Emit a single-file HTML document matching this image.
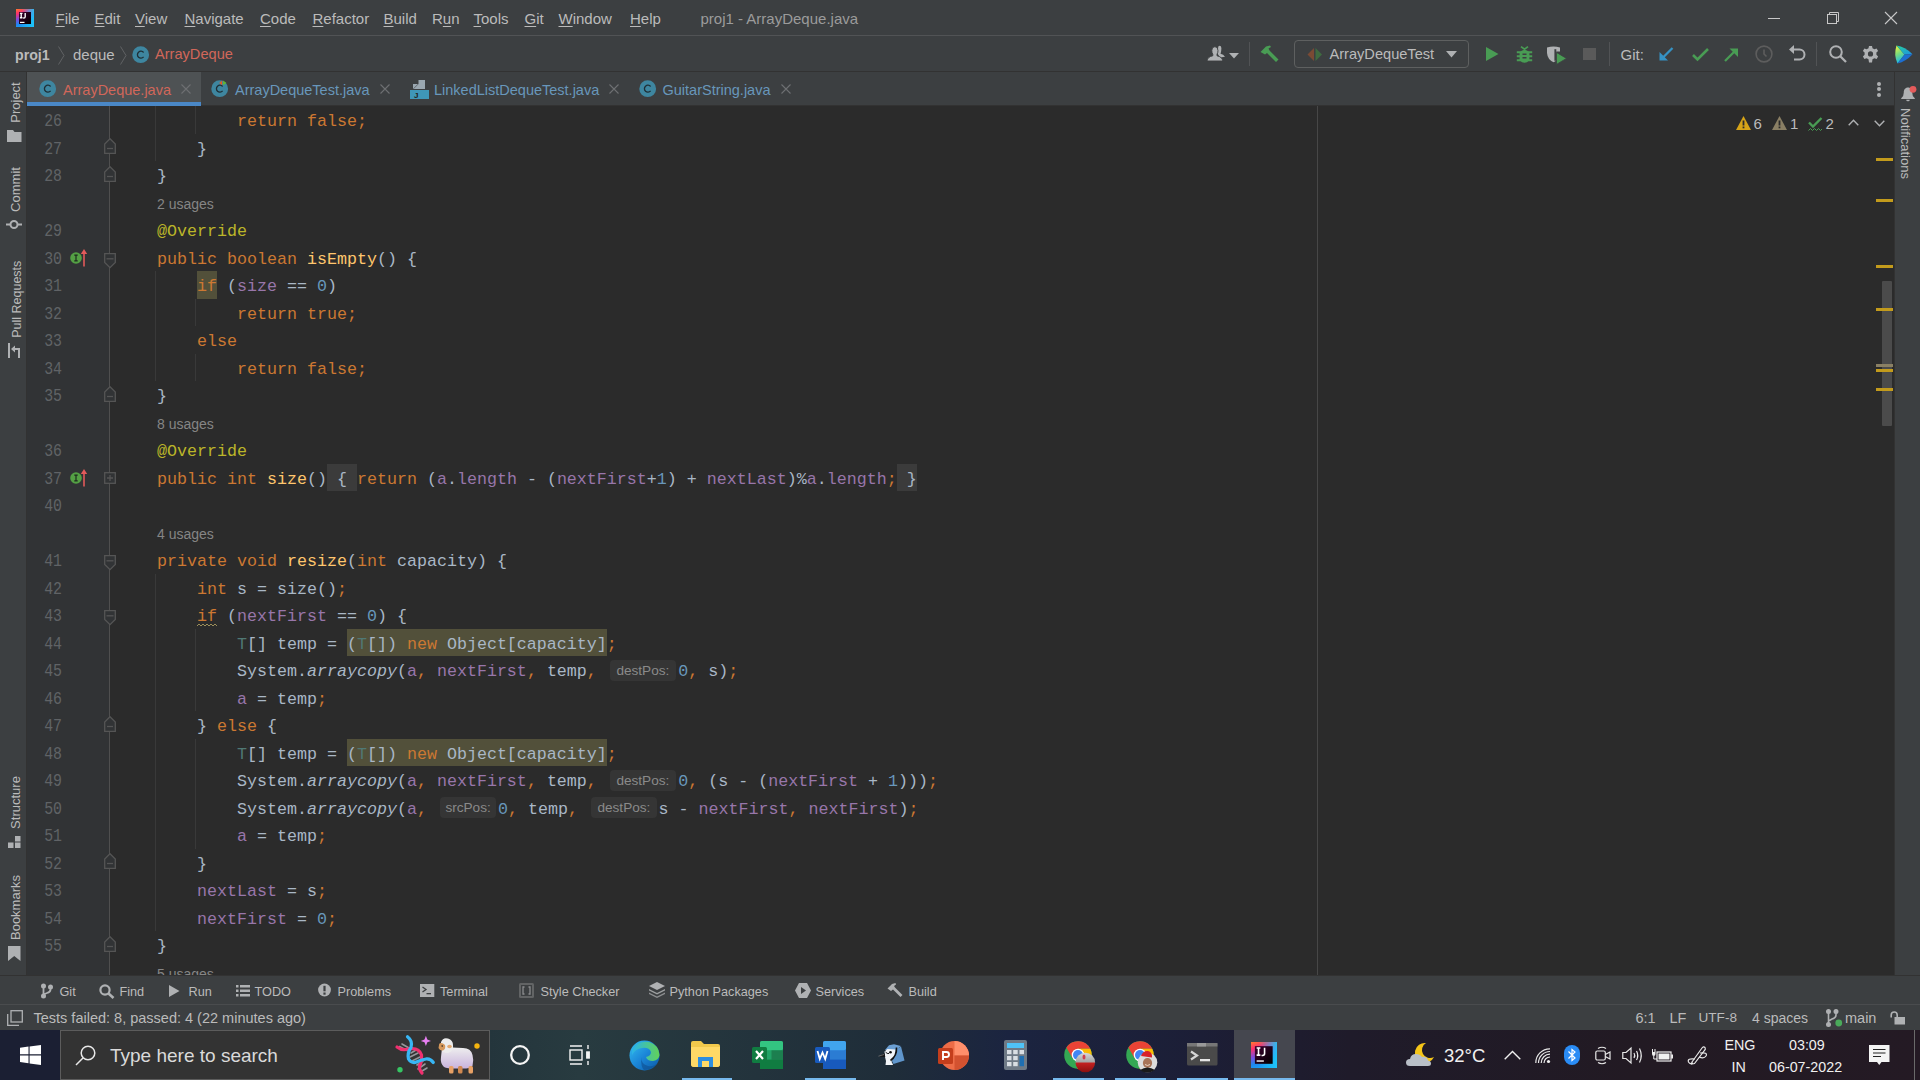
<!DOCTYPE html><html><head><meta charset="utf-8"><style>
*{margin:0;padding:0;box-sizing:border-box}
html,body{width:1920px;height:1080px;overflow:hidden;background:#2b2b2b;font-family:"Liberation Sans",sans-serif;position:relative}
.a{position:absolute;white-space:pre}
.b{position:absolute}
svg{position:absolute;overflow:visible}
.k{color:#cc7832}.an{color:#bbb529}.fn{color:#ffc66d}.f{color:#9876aa}.n{color:#6897bb}.tp{color:#507874}.it{font-style:italic}
.hl{background:#52503a;}
.u{text-decoration:underline;text-underline-offset:2px;text-decoration-thickness:1px}
</style></head><body>
<div class="b" style="left:0;top:0;width:1920px;height:35px;background:#3c3f41"></div>
<div class="b" style="left:0;top:35px;width:1920px;height:1px;background:#515355"></div>
<div class="b" style="left:0;top:36px;width:1920px;height:36px;background:#3c3f41"></div>
<div class="b" style="left:0;top:71px;width:1920px;height:1px;background:#323232"></div>
<div class="b" style="left:0;top:72px;width:1920px;height:33px;background:#3c3f41"></div>
<div class="b" style="left:0;top:105px;width:1920px;height:1px;background:#323232"></div>
<div class="b" style="left:27px;top:106px;width:83px;height:870px;background:#313335"></div>
<div class="b" style="left:110px;top:106px;width:1784px;height:870px;background:#2b2b2b"></div>
<div class="b" style="left:0;top:72px;width:26px;height:904px;background:#3c3f41"></div>
<div class="b" style="left:26px;top:72px;width:1px;height:904px;background:#323232"></div>
<div class="b" style="left:1894px;top:72px;width:1px;height:904px;background:#323232"></div>
<div class="b" style="left:1895px;top:72px;width:25px;height:904px;background:#3c3f41"></div>
<div class="b" style="left:0;top:976px;width:1920px;height:28px;background:#3c3f41"></div>
<div class="b" style="left:0;top:975px;width:1920px;height:1px;background:#323232"></div>
<div class="b" style="left:0;top:1004px;width:1920px;height:1px;background:#4a4c4e"></div>
<div class="b" style="left:0;top:1005px;width:1920px;height:25px;background:#3c3f41"></div>
<div class="b" style="left:0;top:1030px;width:1920px;height:50px;background:linear-gradient(90deg,#1b2033 0%,#24353c 25.5%,#283b40 30.2%,#1f2d39 46.4%,#1b2440 52.6%,#1c1e36 62.5%,#1f1b2a 70.3%,#221a23 84.9%,#241a24 100%)"></div>
<svg style="left:16px;top:9px" width="18" height="18" viewBox="0 0 18 18">
<defs><linearGradient id="ijg" x1="0" y1="0" x2="0.35" y2="1"><stop offset="0" stop-color="#ff7a2e"/><stop offset="0.25" stop-color="#ff2f6d"/><stop offset="0.55" stop-color="#7b4ce0"/><stop offset="0.8" stop-color="#1e88f0"/><stop offset="1" stop-color="#1aa0f5"/></linearGradient>
<linearGradient id="ijg2" x1="0" y1="0" x2="1" y2="0"><stop offset="0.3" stop-color="#1ec8f8" stop-opacity="0"/><stop offset="1" stop-color="#1ec8f8" stop-opacity="0.9"/></linearGradient>
<linearGradient id="ijin" x1="0" y1="0" x2="1" y2="1"><stop offset="0" stop-color="#3d0030"/><stop offset="1" stop-color="#000"/></linearGradient></defs>
<rect x="0" y="0" width="18" height="18" fill="url(#ijg)"/><rect x="0" y="0" width="18" height="18" fill="url(#ijg2)"/><rect x="3" y="3" width="12" height="12" fill="url(#ijin)"/>
<path d="M3.9 4.3H6.5M5.2 4.3V8.7M3.9 8.7H6.5M9.2 4V7.7Q9.2 9 7.9 9H7.2" fill="none" stroke="#fff" stroke-width="1.35"/>
<rect x="4" y="12.8" width="4.5" height="1.2" fill="#fff"/></svg>
<div class="a" style="left:55.50px;top:11.40px;font-family:'Liberation Sans';font-size:15px;line-height:15px;color:#bbbbbb;"><span class="u">F</span>ile</div>
<div class="a" style="left:94.50px;top:11.40px;font-family:'Liberation Sans';font-size:15px;line-height:15px;color:#bbbbbb;"><span class="u">E</span>dit</div>
<div class="a" style="left:135.00px;top:11.40px;font-family:'Liberation Sans';font-size:15px;line-height:15px;color:#bbbbbb;"><span class="u">V</span>iew</div>
<div class="a" style="left:184.50px;top:11.40px;font-family:'Liberation Sans';font-size:15px;line-height:15px;color:#bbbbbb;"><span class="u">N</span>avigate</div>
<div class="a" style="left:260.00px;top:11.40px;font-family:'Liberation Sans';font-size:15px;line-height:15px;color:#bbbbbb;"><span class="u">C</span>ode</div>
<div class="a" style="left:312.50px;top:11.40px;font-family:'Liberation Sans';font-size:15px;line-height:15px;color:#bbbbbb;"><span class="u">R</span>efactor</div>
<div class="a" style="left:383.50px;top:11.40px;font-family:'Liberation Sans';font-size:15px;line-height:15px;color:#bbbbbb;"><span class="u">B</span>uild</div>
<div class="a" style="left:432.00px;top:11.40px;font-family:'Liberation Sans';font-size:15px;line-height:15px;color:#bbbbbb;">R<span class="u">u</span>n</div>
<div class="a" style="left:473.50px;top:11.40px;font-family:'Liberation Sans';font-size:15px;line-height:15px;color:#bbbbbb;"><span class="u">T</span>ools</div>
<div class="a" style="left:524.50px;top:11.40px;font-family:'Liberation Sans';font-size:15px;line-height:15px;color:#bbbbbb;"><span class="u">G</span>it</div>
<div class="a" style="left:558.50px;top:11.40px;font-family:'Liberation Sans';font-size:15px;line-height:15px;color:#bbbbbb;"><span class="u">W</span>indow</div>
<div class="a" style="left:630.00px;top:11.40px;font-family:'Liberation Sans';font-size:15px;line-height:15px;color:#bbbbbb;"><span class="u">H</span>elp</div>
<div class="a" style="left:700.50px;top:11.40px;font-family:'Liberation Sans';font-size:15px;line-height:15px;color:#9b9b9b;">proj1 - ArrayDeque.java</div>
<div class="b" style="left:1768px;top:18px;width:12px;height:1px;background:#c8c8c8"></div>
<svg style="left:1826px;top:11px" width="14" height="14" viewBox="0 0 14 14" fill="none" stroke="#c8c8c8" stroke-width="1">
<rect x="1.5" y="3.5" width="9" height="9"/><path d="M3.5 3.5V1.5H12.5V10.5H10.5"/></svg>
<svg style="left:1884px;top:11px" width="14" height="14" viewBox="0 0 14 14" fill="none" stroke="#c8c8c8" stroke-width="1.1">
<path d="M1 1L13 13M13 1L1 13"/></svg>
<div class="a" style="left:15.00px;top:47.58px;font-family:'Liberation Sans';font-size:14.2px;line-height:14.2px;color:#bbbbbb;font-weight:bold">proj1</div>
<svg style="left:57.5px;top:45.5px" width="7" height="19" viewBox="0 0 7 19" fill="none" stroke="#606264" stroke-width="1"><path d="M0.5 0.5L6 9.5L0.5 18.5"/></svg>
<div class="a" style="left:73.00px;top:46.90px;font-family:'Liberation Sans';font-size:15px;line-height:15px;color:#bbbbbb;">deque</div>
<svg style="left:119.5px;top:45.5px" width="7" height="19" viewBox="0 0 7 19" fill="none" stroke="#606264" stroke-width="1"><path d="M0.5 0.5L6 9.5L0.5 18.5"/></svg>
<svg style="left:132.3px;top:45.599999999999994px" width="17.4" height="17.4" viewBox="-9 -9 18 18">
<circle cx="0" cy="0" r="8.7" fill="#3e86a0"/><path d="M3 -2.3A3.6 3.6 0 1 0 3 2.3" fill="none" stroke="#1f2f36" stroke-width="1.35"/></svg>
<div class="a" style="left:155.00px;top:47.24px;font-family:'Liberation Sans';font-size:14.6px;line-height:14.6px;color:#d1675a;">ArrayDeque</div>
<svg style="left:1200px;top:40px" width="28" height="24" viewBox="0 0 28 24">
<path d="M18.3 6.5Q19.5 5.3 20.8 6.2Q21.8 7.5 21.2 11Q20.8 13 20.5 13.8Q23.5 14.5 25 16.8L20 17.5L17.5 13.5z" fill="#afb1b3"/>
<path d="M7 21Q7.5 16.8 12.8 15.8V14.2Q11.8 12.8 11.8 10.6Q11.8 6.7 14.9 6.7Q18 6.7 18 10.6Q18 12.8 17 14.2V15.8Q22.2 16.8 22.8 21z" fill="#afb1b3" stroke="#3c3f41" stroke-width="0.9"/></svg>
<svg style="left:1229px;top:52.5px" width="10" height="6" viewBox="0 0 10 6"><path d="M0 0H10L5 5.5z" fill="#afb1b3"/></svg>
<div class="b" style="left:1249px;top:42px;width:1px;height:24px;background:#515355"></div>
<svg style="left:1260px;top:44.5px" width="19" height="18" viewBox="0 0 19 18">
<path d="M0.5 7L6 1.5L10 0.5L11 2L8.5 3.5L9.5 5.5L18.5 14.5L16 17L7 8L5 9.5z" fill="#499c54"/></svg>
<div class="b" style="left:1294px;top:40px;width:174.5px;height:27.5px;border:1.3px solid #5e6060;border-radius:4px"></div>
<svg style="left:1307px;top:47.5px" width="16" height="13" viewBox="0 0 16 13">
<path d="M7 0L0.5 6.5L7 13z" fill="#7a4a34"/><path d="M8.5 0L15 6.5L8.5 13z" fill="#3f6b40"/></svg>
<div class="a" style="left:1329.50px;top:47.44px;font-family:'Liberation Sans';font-size:14.6px;line-height:14.6px;color:#bbbbbb;">ArrayDequeTest</div>
<svg style="left:1446px;top:51px" width="11" height="7" viewBox="0 0 11 7"><path d="M0 0H11L5.5 6.5z" fill="#afb1b3"/></svg>
<svg style="left:1486px;top:47px" width="13" height="14" viewBox="0 0 13 14"><path d="M0 0L12.5 7L0 14z" fill="#499c54"/></svg>
<svg style="left:1515.5px;top:45.5px" width="17" height="18" viewBox="0 0 17 18">
<path d="M5 0.6L8.5 3.2L12 0.6" fill="none" stroke="#499c54" stroke-width="1.8"/>
<path d="M3.6 6.3Q8.5 1.2 13.4 6.3V14.2Q8.5 19.2 3.6 14.2z" fill="#499c54"/>
<path d="M0.8 6.2H16.2M0.8 10.25H16.2M0.8 14.3H16.2" stroke="#499c54" stroke-width="2.1"/>
<path d="M6.5 8.2H10.5M6.5 11.8H10.5" stroke="#3c3f41" stroke-width="1.6"/></svg>
<svg style="left:1546px;top:45px" width="21" height="20" viewBox="0 0 21 20">
<path d="M1 2.5Q7.5 0.3 14 2.5V6.4H10.3V15.5Q9 16.5 7.5 17.2Q1.5 14.5 1 8z" fill="#afb1b3"/><rect x="8.4" y="4.2" width="1.9" height="11.6" fill="#3c3f41"/>
<path d="M10.5 7.4L20.5 13.4L10.5 19.4z" fill="#499c54" stroke="#3c3f41" stroke-width="0.8"/></svg>
<div class="b" style="left:1583px;top:47.5px;width:12.5px;height:12.5px;background:#5a5a5a"></div>
<div class="b" style="left:1609px;top:42px;width:1px;height:24px;background:#515355"></div>
<div class="a" style="left:1620.50px;top:47.10px;font-family:'Liberation Sans';font-size:15px;line-height:15px;color:#bbbbbb;">Git:</div>
<svg style="left:1659px;top:46.5px" width="15" height="14" viewBox="0 0 15 14">
<path d="M13.5 1L3 11.5" stroke="#3592c4" stroke-width="2.3"/><path d="M0.5 5V13.5H9z" fill="#3592c4"/></svg>
<svg style="left:1691.5px;top:46.5px" width="17" height="14" viewBox="0 0 17 14">
<path d="M1 8L5.5 12.5L16 2" fill="none" stroke="#499c54" stroke-width="2.6"/></svg>
<svg style="left:1723.5px;top:47.5px" width="15" height="14" viewBox="0 0 15 14">
<path d="M1 13L11.5 2.5" stroke="#499c54" stroke-width="2.3"/><path d="M5.5 0.5H14V9z" fill="#499c54"/></svg>
<svg style="left:1755px;top:45px" width="18" height="18" viewBox="0 0 18 18" fill="none" stroke="#5d5d5d" stroke-width="1.6">
<circle cx="9" cy="9" r="7.9"/><path d="M9 4.5V9L11.5 11.5"/></svg>
<svg style="left:1788.5px;top:45px" width="17" height="17" viewBox="0 0 17 17">
<path d="M0 4.5L5 0V9z" fill="#afb1b3"/><path d="M4 4.5H10.5A5 5 0 0 1 10.5 14.5H5" fill="none" stroke="#afb1b3" stroke-width="2"/></svg>
<div class="b" style="left:1816px;top:42px;width:1px;height:24px;background:#515355"></div>
<svg style="left:1829px;top:45px" width="18" height="18" viewBox="0 0 18 18" fill="none" stroke="#afb1b3">
<circle cx="7" cy="7" r="5.8" stroke-width="2"/><path d="M11 11L17 17" stroke-width="2.3"/></svg>
<svg style="left:1861.5px;top:45.5px" width="17" height="17" viewBox="0 0 17 17">
<path fill="#afb1b3" fill-rule="evenodd" d="M7 0H10L10.5 2.3L12.4 3.3L14.6 2.5L16.1 5.1L14.4 6.6V8.8L16.1 10.4L14.6 13L12.4 12.2L10.5 13.2L10 16.5H7L6.5 13.2L4.6 12.2L2.4 13L0.9 10.4L2.6 8.8V6.6L0.9 5.1L2.4 2.5L4.6 3.3L6.5 2.3zM8.5 5.3A2.6 2.6 0 1 0 8.5 10.5A2.6 2.6 0 1 0 8.5 5.3z"/></svg>
<svg style="left:1893.5px;top:44.5px" width="19" height="19" viewBox="0 0 19 19">
<defs><linearGradient id="gw1" x1="0" y1="0" x2="0.3" y2="1"><stop offset="0" stop-color="#fcf83a"/><stop offset="0.5" stop-color="#7ddc7a"/><stop offset="1" stop-color="#16b8ec"/></linearGradient>
<linearGradient id="gw2" x1="0" y1="0" x2="1" y2="1"><stop offset="0" stop-color="#28d39a"/><stop offset="1" stop-color="#1c8fe6"/></linearGradient></defs>
<path d="M2.5 0.5L10.5 9.5L3.5 18.5Q-0.5 10 2.5 0.5z" fill="url(#gw1)"/><path d="M2.5 0.5Q11 1.5 18.5 9.3L10.5 9.5z" fill="url(#gw2)"/><path d="M3.5 18.5L10.5 9.5L18.5 9.3Q12 16.5 3.5 18.5z" fill="#1d6fd1"/></svg>
<div class="b" style="left:27px;top:72px;width:174px;height:34px;background:#4e5254"></div>
<div class="b" style="left:27px;top:102px;width:174px;height:4px;background:#4a88c7"></div>
<svg style="left:39.3px;top:80.3px" width="17.4" height="17.4" viewBox="-9 -9 18 18">
<circle cx="0" cy="0" r="8.7" fill="#3e86a0"/><path d="M3 -2.3A3.6 3.6 0 1 0 3 2.3" fill="none" stroke="#1f2f36" stroke-width="1.35"/></svg>
<div class="a" style="left:63.00px;top:82.93px;font-family:'Liberation Sans';font-size:14.5px;line-height:14.5px;color:#d1675a;">ArrayDeque.java</div>
<svg style="left:181px;top:84px" width="10" height="10" viewBox="0 0 10 10"><path d="M0.5 0.5L9.5 9.5M9.5 0.5L0.5 9.5" stroke="#6e7072" stroke-width="1.1"/></svg>
<svg style="left:211.3px;top:80.3px" width="17.4" height="17.4" viewBox="-9 -9 18 18">
<circle cx="0" cy="0" r="8.7" fill="#3e86a0"/><path d="M3 -2.3A3.6 3.6 0 1 0 3 2.3" fill="none" stroke="#1f2f36" stroke-width="1.35"/><path d="M2.5 -8.5L-0.5 -6L2.5 -3.5z" fill="#e05a29"/><path d="M3.5 -8.5L7 -6L3.5 -3.5z" fill="#5fb832"/></svg>
<div class="a" style="left:235.00px;top:82.93px;font-family:'Liberation Sans';font-size:14.5px;line-height:14.5px;color:#6897bb;">ArrayDequeTest.java</div>
<svg style="left:380px;top:84px" width="10" height="10" viewBox="0 0 10 10"><path d="M0.5 0.5L9.5 9.5M9.5 0.5L0.5 9.5" stroke="#6e7072" stroke-width="1.1"/></svg>
<svg style="left:410px;top:80px" width="19" height="19" viewBox="0 0 19 19">
<path d="M3 9L8 4H3z" fill="#9aa7b0"/><path d="M8.5 0H15V9H3.5L8.5 4z" fill="#9aa7b0"/>
<rect x="0" y="10" width="19" height="9" fill="#40b6e0" opacity="0.75"/><text x="4" y="18" font-family="Liberation Sans" font-size="8" font-weight="bold" fill="#231f20">J</text></svg>
<div class="a" style="left:434.00px;top:82.93px;font-family:'Liberation Sans';font-size:14.5px;line-height:14.5px;color:#6897bb;">LinkedListDequeTest.java</div>
<svg style="left:609px;top:84px" width="10" height="10" viewBox="0 0 10 10"><path d="M0.5 0.5L9.5 9.5M9.5 0.5L0.5 9.5" stroke="#6e7072" stroke-width="1.1"/></svg>
<svg style="left:638.8px;top:80.3px" width="17.4" height="17.4" viewBox="-9 -9 18 18">
<circle cx="0" cy="0" r="8.7" fill="#3e86a0"/><path d="M3 -2.3A3.6 3.6 0 1 0 3 2.3" fill="none" stroke="#1f2f36" stroke-width="1.35"/></svg>
<div class="a" style="left:662.50px;top:82.93px;font-family:'Liberation Sans';font-size:14.5px;line-height:14.5px;color:#6897bb;">GuitarString.java</div>
<svg style="left:781px;top:84px" width="10" height="10" viewBox="0 0 10 10"><path d="M0.5 0.5L9.5 9.5M9.5 0.5L0.5 9.5" stroke="#6e7072" stroke-width="1.1"/></svg>
<div class="b" style="left:1877px;top:81.5px;width:4px;height:4px;border-radius:2px;background:#afb1b3"></div>
<div class="b" style="left:1877px;top:87px;width:4px;height:4px;border-radius:2px;background:#afb1b3"></div>
<div class="b" style="left:1877px;top:92.5px;width:4px;height:4px;border-radius:2px;background:#afb1b3"></div>
<div class="a" style="left:-84.7px;top:95.9px;width:200px;height:13px;line-height:13px;text-align:center;font-size:13px;color:#bbbbbb;transform:rotate(-90deg)">Project</div>
<svg style="left:7px;top:129.5px" width="15" height="12" viewBox="0 0 15 12"><path d="M0 0H6L7.5 2H14.5V12H0z" fill="#afb1b3"/></svg>
<div class="a" style="left:-84.7px;top:183.3px;width:200px;height:13px;line-height:13px;text-align:center;font-size:13px;color:#bbbbbb;transform:rotate(-90deg)">Commit</div>
<svg style="left:6px;top:219px" width="16" height="11" viewBox="0 0 16 11"><circle cx="8" cy="5.5" r="3.5" fill="none" stroke="#afb1b3" stroke-width="2"/><path d="M0 5.5H4.5M11.5 5.5H16" stroke="#afb1b3" stroke-width="2"/></svg>
<div class="a" style="left:-83.4px;top:292.9px;width:200px;height:12.5px;line-height:12.5px;text-align:center;font-size:12.5px;color:#bbbbbb;transform:rotate(-90deg)">Pull Requests</div>
<svg style="left:8px;top:343px" width="14" height="15" viewBox="0 0 14 15" fill="#afb1b3"><rect x="0" y="0" width="2" height="15"/><path d="M3 6L7 2.5V5H12V15H10V7H7V9.5z"/></svg>
<div class="a" style="left:-84.7px;top:796.3499999999999px;width:200px;height:13px;line-height:13px;text-align:center;font-size:13px;color:#bbbbbb;transform:rotate(-90deg)">Structure</div>
<svg style="left:8px;top:836px" width="13" height="12" viewBox="0 0 13 12" fill="#afb1b3"><rect x="7" y="0" width="5.5" height="5.5"/><rect x="0" y="6.5" width="5.5" height="5.5"/><rect x="7" y="6.5" width="5.5" height="5.5"/></svg>
<div class="a" style="left:-84.7px;top:901.45px;width:200px;height:13px;line-height:13px;text-align:center;font-size:13px;color:#bbbbbb;transform:rotate(-90deg)">Bookmarks</div>
<svg style="left:8px;top:945.5px" width="13" height="15" viewBox="0 0 13 15"><path d="M0 0H12.5V15L6.25 10L0 15z" fill="#afb1b3"/></svg>
<svg style="left:1901px;top:86px" width="16" height="16" viewBox="0 0 16 16">
<path d="M7 1.5C4 1.5 2.8 4 2.8 6.5Q2.8 10.5 0.2 12.3V13H13.8V12.3Q11.2 10.5 11.2 6.5C11.2 4 10 1.5 7 1.5z" fill="#afb1b3"/><path d="M5.2 13.8H8.8Q8.8 15.3 7 15.3Q5.2 15.3 5.2 13.8z" fill="#afb1b3"/>
<circle cx="12" cy="3.3" r="3.4" fill="#e55b5b"/></svg>
<div class="a" style="left:1804.5px;top:136.95px;width:200px;height:13px;line-height:13px;text-align:center;font-size:13px;color:#bbbbbb;transform:rotate(90deg)">Notifications</div>
<div class="b" style="left:1317px;top:106px;width:1px;height:869px;background:#474747"></div>
<svg style="left:1736px;top:115.8px" width="15" height="14" viewBox="0 0 15 14"><path d="M7.5 0L15 14H0z" fill="#d6a418"/><rect x="6.6" y="4.5" width="1.8" height="5" fill="#2b2b2b"/><rect x="6.6" y="10.5" width="1.8" height="1.8" fill="#2b2b2b"/></svg>
<div class="a" style="left:1753.50px;top:116.30px;font-family:'Liberation Sans';font-size:15px;line-height:15px;color:#bbbbbb;">6</div>
<svg style="left:1772px;top:115.8px" width="15" height="14" viewBox="0 0 15 14"><path d="M7.5 0L15 14H0z" fill="#8a7f64"/><rect x="6.6" y="4.5" width="1.8" height="5" fill="#2b2b2b"/><rect x="6.6" y="10.5" width="1.8" height="1.8" fill="#2b2b2b"/></svg>
<div class="a" style="left:1790.00px;top:116.30px;font-family:'Liberation Sans';font-size:15px;line-height:15px;color:#bbbbbb;">1</div>
<svg style="left:1807.5px;top:117px" width="15" height="15" viewBox="0 0 15 15" fill="none" stroke="#499c54">
<path d="M1 5.5L5 9.5L13.5 1" stroke-width="2.4"/><path d="M0.5 13.5L2.5 11.5L4.5 13.5L6.5 11.5L8.5 13.5L10.5 11.5L12.5 13.5L14 12" stroke-width="1"/></svg>
<div class="a" style="left:1825.50px;top:116.30px;font-family:'Liberation Sans';font-size:15px;line-height:15px;color:#bbbbbb;">2</div>
<svg style="left:1847.5px;top:119px" width="11" height="7" viewBox="0 0 11 7"><path d="M0.7 6.3L5.5 1.3L10.3 6.3" fill="none" stroke="#afb1b3" stroke-width="1.4"/></svg>
<svg style="left:1873.5px;top:120px" width="11" height="7" viewBox="0 0 11 7"><path d="M0.7 0.7L5.5 5.7L10.3 0.7" fill="none" stroke="#afb1b3" stroke-width="1.4"/></svg>
<div class="b" style="left:1882px;top:281px;width:10px;height:145px;background:#4b4b4b;border-radius:1px"></div>
<div class="b" style="left:1876px;top:157.5px;width:17px;height:3px;background:#c39b1c"></div>
<div class="b" style="left:1876px;top:198.5px;width:17px;height:3px;background:#c39b1c"></div>
<div class="b" style="left:1876px;top:264.5px;width:17px;height:3px;background:#c39b1c"></div>
<div class="b" style="left:1876px;top:307.5px;width:17px;height:3px;background:#c39b1c"></div>
<div class="b" style="left:1876px;top:368.5px;width:17px;height:3px;background:#c39b1c"></div>
<div class="b" style="left:1876px;top:387.5px;width:17px;height:3px;background:#c39b1c"></div>
<div class="b" style="left:1876px;top:364px;width:17px;height:3px;background:#8a8064"></div>
<div class="b" style="left:155px;top:106px;width:1px;height:55.25px;background:#393939"></div>
<div class="b" style="left:195px;top:106px;width:1px;height:27.75px;background:#393939"></div>
<div class="b" style="left:155px;top:271.25px;width:1px;height:110.0px;background:#393939"></div>
<div class="b" style="left:195px;top:298.75px;width:1px;height:27.5px;background:#393939"></div>
<div class="b" style="left:195px;top:353.75px;width:1px;height:27.5px;background:#393939"></div>
<div class="b" style="left:155px;top:573.75px;width:1px;height:357.5px;background:#393939"></div>
<div class="b" style="left:195px;top:628.75px;width:1px;height:82.5px;background:#393939"></div>
<div class="b" style="left:195px;top:738.75px;width:1px;height:110.0px;background:#393939"></div>
<div class="b" style="left:197px;top:271.25px;width:20px;height:27.5px;background:#52503a"></div>
<div class="b" style="left:347px;top:628.75px;width:260px;height:27.5px;background:#52503a"></div>
<div class="b" style="left:347px;top:738.75px;width:260px;height:27.5px;background:#52503a"></div>
<div class="b" style="left:327px;top:464.25px;width:30px;height:26.5px;background:#3b3b3b"></div>
<div class="b" style="left:897px;top:464.25px;width:20px;height:26.5px;background:#3b3b3b"></div>
<div class="b" style="left:110px;top:106px;width:1784px;height:869px;overflow:hidden">
<div class="a" style="left:47px;top:8.07px;font-family:'Liberation Mono';font-size:16.667px;line-height:16.667px;color:#a9b7c6">        <span class="k">return false;</span></div>
<div class="a" style="left:47px;top:35.57px;font-family:'Liberation Mono';font-size:16.667px;line-height:16.667px;color:#a9b7c6">    }</div>
<div class="a" style="left:47px;top:63.07px;font-family:'Liberation Mono';font-size:16.667px;line-height:16.667px;color:#a9b7c6">}</div>
<div class="a" style="left:47px;top:118.07px;font-family:'Liberation Mono';font-size:16.667px;line-height:16.667px;color:#a9b7c6"><span class="an">@Override</span></div>
<div class="a" style="left:47px;top:145.57px;font-family:'Liberation Mono';font-size:16.667px;line-height:16.667px;color:#a9b7c6"><span class="k">public boolean </span><span class="fn">isEmpty</span>() {</div>
<div class="a" style="left:47px;top:173.07px;font-family:'Liberation Mono';font-size:16.667px;line-height:16.667px;color:#a9b7c6">    <span class="k">if</span> (<span class="f">size</span> == <span class="n">0</span>)</div>
<div class="a" style="left:47px;top:200.57px;font-family:'Liberation Mono';font-size:16.667px;line-height:16.667px;color:#a9b7c6">        <span class="k">return true;</span></div>
<div class="a" style="left:47px;top:228.07px;font-family:'Liberation Mono';font-size:16.667px;line-height:16.667px;color:#a9b7c6">    <span class="k">else</span></div>
<div class="a" style="left:47px;top:255.57px;font-family:'Liberation Mono';font-size:16.667px;line-height:16.667px;color:#a9b7c6">        <span class="k">return false;</span></div>
<div class="a" style="left:47px;top:283.07px;font-family:'Liberation Mono';font-size:16.667px;line-height:16.667px;color:#a9b7c6">}</div>
<div class="a" style="left:47px;top:338.07px;font-family:'Liberation Mono';font-size:16.667px;line-height:16.667px;color:#a9b7c6"><span class="an">@Override</span></div>
<div class="a" style="left:47px;top:365.57px;font-family:'Liberation Mono';font-size:16.667px;line-height:16.667px;color:#a9b7c6"><span class="k">public int </span><span class="fn">size</span>() { <span class="k">return</span> (<span class="f">a</span>.<span class="f">length</span> - (<span class="f">nextFirst</span>+<span class="n">1</span>) + <span class="f">nextLast</span>)%<span class="f">a</span>.<span class="f">length</span><span class="k">;</span> }</div>
<div class="a" style="left:47px;top:393.07px;font-family:'Liberation Mono';font-size:16.667px;line-height:16.667px;color:#a9b7c6"></div>
<div class="a" style="left:47px;top:448.07px;font-family:'Liberation Mono';font-size:16.667px;line-height:16.667px;color:#a9b7c6"><span class="k">private void </span><span class="fn">resize</span>(<span class="k">int</span> capacity) {</div>
<div class="a" style="left:47px;top:475.57px;font-family:'Liberation Mono';font-size:16.667px;line-height:16.667px;color:#a9b7c6">    <span class="k">int</span> s = size()<span class="k">;</span></div>
<div class="a" style="left:47px;top:503.07px;font-family:'Liberation Mono';font-size:16.667px;line-height:16.667px;color:#a9b7c6">    <span class="k">if</span> (<span class="f">nextFirst</span> == <span class="n">0</span>) {</div>
<div class="a" style="left:47px;top:530.57px;font-family:'Liberation Mono';font-size:16.667px;line-height:16.667px;color:#a9b7c6">        <span class="tp">T</span>[] temp = (<span class="tp">T</span>[]) <span class="k">new</span> Object[capacity]<span class="k">;</span></div>
<div class="a" style="left:47px;top:558.07px;font-family:'Liberation Mono';font-size:16.667px;line-height:16.667px;color:#a9b7c6">        System.<span class="it">arraycopy</span>(<span class="f">a</span><span class="k">, </span><span class="f">nextFirst</span><span class="k">, </span>temp<span class="k">, </span><span style="display:inline-block;width:71.3px;height:1px;position:relative"><span style="position:absolute;left:3px;top:-15.5px;width:66px;height:21.3px;background:#353535;border-radius:4px;font-family:'Liberation Sans';font-size:13.6px;line-height:22.3px;color:#8a8a8a;text-align:center;font-style:normal">destPos:</span></span><span class="n">0</span><span class="k">, </span>s)<span class="k">;</span></div>
<div class="a" style="left:47px;top:585.57px;font-family:'Liberation Mono';font-size:16.667px;line-height:16.667px;color:#a9b7c6">        <span class="f">a</span> = temp<span class="k">;</span></div>
<div class="a" style="left:47px;top:613.07px;font-family:'Liberation Mono';font-size:16.667px;line-height:16.667px;color:#a9b7c6">    } <span class="k">else</span> {</div>
<div class="a" style="left:47px;top:640.57px;font-family:'Liberation Mono';font-size:16.667px;line-height:16.667px;color:#a9b7c6">        <span class="tp">T</span>[] temp = (<span class="tp">T</span>[]) <span class="k">new</span> Object[capacity]<span class="k">;</span></div>
<div class="a" style="left:47px;top:668.07px;font-family:'Liberation Mono';font-size:16.667px;line-height:16.667px;color:#a9b7c6">        System.<span class="it">arraycopy</span>(<span class="f">a</span><span class="k">, </span><span class="f">nextFirst</span><span class="k">, </span>temp<span class="k">, </span><span style="display:inline-block;width:71.3px;height:1px;position:relative"><span style="position:absolute;left:3px;top:-15.5px;width:66px;height:21.3px;background:#353535;border-radius:4px;font-family:'Liberation Sans';font-size:13.6px;line-height:22.3px;color:#8a8a8a;text-align:center;font-style:normal">destPos:</span></span><span class="n">0</span><span class="k">, </span>(s - (<span class="f">nextFirst</span> + <span class="n">1</span>)))<span class="k">;</span></div>
<div class="a" style="left:47px;top:695.57px;font-family:'Liberation Mono';font-size:16.667px;line-height:16.667px;color:#a9b7c6">        System.<span class="it">arraycopy</span>(<span class="f">a</span><span class="k">, </span><span style="display:inline-block;width:61.0px;height:1px;position:relative"><span style="position:absolute;left:3px;top:-15.5px;width:56.3px;height:21.3px;background:#353535;border-radius:4px;font-family:'Liberation Sans';font-size:13.6px;line-height:22.3px;color:#8a8a8a;text-align:center;font-style:normal">srcPos:</span></span><span class="n">0</span><span class="k">, </span>temp<span class="k">, </span><span style="display:inline-block;width:70.7px;height:1px;position:relative"><span style="position:absolute;left:3px;top:-15.5px;width:66px;height:21.3px;background:#353535;border-radius:4px;font-family:'Liberation Sans';font-size:13.6px;line-height:22.3px;color:#8a8a8a;text-align:center;font-style:normal">destPos:</span></span>s - <span class="f">nextFirst</span><span class="k">, </span><span class="f">nextFirst</span>)<span class="k">;</span></div>
<div class="a" style="left:47px;top:723.07px;font-family:'Liberation Mono';font-size:16.667px;line-height:16.667px;color:#a9b7c6">        <span class="f">a</span> = temp<span class="k">;</span></div>
<div class="a" style="left:47px;top:750.57px;font-family:'Liberation Mono';font-size:16.667px;line-height:16.667px;color:#a9b7c6">    }</div>
<div class="a" style="left:47px;top:778.07px;font-family:'Liberation Mono';font-size:16.667px;line-height:16.667px;color:#a9b7c6">    <span class="f">nextLast</span> = s<span class="k">;</span></div>
<div class="a" style="left:47px;top:805.57px;font-family:'Liberation Mono';font-size:16.667px;line-height:16.667px;color:#a9b7c6">    <span class="f">nextFirst</span> = <span class="n">0</span><span class="k">;</span></div>
<div class="a" style="left:47px;top:833.07px;font-family:'Liberation Mono';font-size:16.667px;line-height:16.667px;color:#a9b7c6">}</div>
<div class="a" style="left:47px;top:90.90px;font-size:14px;line-height:14px;color:#858585">2 usages</div>
<div class="a" style="left:47px;top:310.90px;font-size:14px;line-height:14px;color:#858585">8 usages</div>
<div class="a" style="left:47px;top:420.90px;font-size:14px;line-height:14px;color:#858585">4 usages</div>
<div class="a" style="left:47px;top:860.90px;font-size:14px;line-height:14px;color:#858585">5 usages</div>
</div>
<svg style="left:197px;top:622.75px" width="20" height="4" viewBox="0 0 20 4"><path d="M0 3L2 1L4 3L6 1L8 3L10 1L12 3L14 1L16 3L18 1L20 3" fill="none" stroke="#9c8f5a" stroke-width="1"/></svg>
<div class="a" style="left:21.5px;width:40px;text-align:right;top:113.19px;font-family:'Liberation Mono';font-size:18.6px;line-height:18.6px;color:#606366;transform:scaleX(0.8);transform-origin:100% 50%">26</div>
<div class="a" style="left:21.5px;width:40px;text-align:right;top:140.69px;font-family:'Liberation Mono';font-size:18.6px;line-height:18.6px;color:#606366;transform:scaleX(0.8);transform-origin:100% 50%">27</div>
<div class="a" style="left:21.5px;width:40px;text-align:right;top:168.19px;font-family:'Liberation Mono';font-size:18.6px;line-height:18.6px;color:#606366;transform:scaleX(0.8);transform-origin:100% 50%">28</div>
<div class="a" style="left:21.5px;width:40px;text-align:right;top:223.19px;font-family:'Liberation Mono';font-size:18.6px;line-height:18.6px;color:#606366;transform:scaleX(0.8);transform-origin:100% 50%">29</div>
<div class="a" style="left:21.5px;width:40px;text-align:right;top:250.69px;font-family:'Liberation Mono';font-size:18.6px;line-height:18.6px;color:#606366;transform:scaleX(0.8);transform-origin:100% 50%">30</div>
<div class="a" style="left:21.5px;width:40px;text-align:right;top:278.19px;font-family:'Liberation Mono';font-size:18.6px;line-height:18.6px;color:#606366;transform:scaleX(0.8);transform-origin:100% 50%">31</div>
<div class="a" style="left:21.5px;width:40px;text-align:right;top:305.69px;font-family:'Liberation Mono';font-size:18.6px;line-height:18.6px;color:#606366;transform:scaleX(0.8);transform-origin:100% 50%">32</div>
<div class="a" style="left:21.5px;width:40px;text-align:right;top:333.19px;font-family:'Liberation Mono';font-size:18.6px;line-height:18.6px;color:#606366;transform:scaleX(0.8);transform-origin:100% 50%">33</div>
<div class="a" style="left:21.5px;width:40px;text-align:right;top:360.69px;font-family:'Liberation Mono';font-size:18.6px;line-height:18.6px;color:#606366;transform:scaleX(0.8);transform-origin:100% 50%">34</div>
<div class="a" style="left:21.5px;width:40px;text-align:right;top:388.19px;font-family:'Liberation Mono';font-size:18.6px;line-height:18.6px;color:#606366;transform:scaleX(0.8);transform-origin:100% 50%">35</div>
<div class="a" style="left:21.5px;width:40px;text-align:right;top:443.19px;font-family:'Liberation Mono';font-size:18.6px;line-height:18.6px;color:#606366;transform:scaleX(0.8);transform-origin:100% 50%">36</div>
<div class="a" style="left:21.5px;width:40px;text-align:right;top:470.69px;font-family:'Liberation Mono';font-size:18.6px;line-height:18.6px;color:#606366;transform:scaleX(0.8);transform-origin:100% 50%">37</div>
<div class="a" style="left:21.5px;width:40px;text-align:right;top:498.19px;font-family:'Liberation Mono';font-size:18.6px;line-height:18.6px;color:#606366;transform:scaleX(0.8);transform-origin:100% 50%">40</div>
<div class="a" style="left:21.5px;width:40px;text-align:right;top:553.19px;font-family:'Liberation Mono';font-size:18.6px;line-height:18.6px;color:#606366;transform:scaleX(0.8);transform-origin:100% 50%">41</div>
<div class="a" style="left:21.5px;width:40px;text-align:right;top:580.69px;font-family:'Liberation Mono';font-size:18.6px;line-height:18.6px;color:#606366;transform:scaleX(0.8);transform-origin:100% 50%">42</div>
<div class="a" style="left:21.5px;width:40px;text-align:right;top:608.19px;font-family:'Liberation Mono';font-size:18.6px;line-height:18.6px;color:#606366;transform:scaleX(0.8);transform-origin:100% 50%">43</div>
<div class="a" style="left:21.5px;width:40px;text-align:right;top:635.69px;font-family:'Liberation Mono';font-size:18.6px;line-height:18.6px;color:#606366;transform:scaleX(0.8);transform-origin:100% 50%">44</div>
<div class="a" style="left:21.5px;width:40px;text-align:right;top:663.19px;font-family:'Liberation Mono';font-size:18.6px;line-height:18.6px;color:#606366;transform:scaleX(0.8);transform-origin:100% 50%">45</div>
<div class="a" style="left:21.5px;width:40px;text-align:right;top:690.69px;font-family:'Liberation Mono';font-size:18.6px;line-height:18.6px;color:#606366;transform:scaleX(0.8);transform-origin:100% 50%">46</div>
<div class="a" style="left:21.5px;width:40px;text-align:right;top:718.19px;font-family:'Liberation Mono';font-size:18.6px;line-height:18.6px;color:#606366;transform:scaleX(0.8);transform-origin:100% 50%">47</div>
<div class="a" style="left:21.5px;width:40px;text-align:right;top:745.69px;font-family:'Liberation Mono';font-size:18.6px;line-height:18.6px;color:#606366;transform:scaleX(0.8);transform-origin:100% 50%">48</div>
<div class="a" style="left:21.5px;width:40px;text-align:right;top:773.19px;font-family:'Liberation Mono';font-size:18.6px;line-height:18.6px;color:#606366;transform:scaleX(0.8);transform-origin:100% 50%">49</div>
<div class="a" style="left:21.5px;width:40px;text-align:right;top:800.69px;font-family:'Liberation Mono';font-size:18.6px;line-height:18.6px;color:#606366;transform:scaleX(0.8);transform-origin:100% 50%">50</div>
<div class="a" style="left:21.5px;width:40px;text-align:right;top:828.19px;font-family:'Liberation Mono';font-size:18.6px;line-height:18.6px;color:#606366;transform:scaleX(0.8);transform-origin:100% 50%">51</div>
<div class="a" style="left:21.5px;width:40px;text-align:right;top:855.69px;font-family:'Liberation Mono';font-size:18.6px;line-height:18.6px;color:#606366;transform:scaleX(0.8);transform-origin:100% 50%">52</div>
<div class="a" style="left:21.5px;width:40px;text-align:right;top:883.19px;font-family:'Liberation Mono';font-size:18.6px;line-height:18.6px;color:#606366;transform:scaleX(0.8);transform-origin:100% 50%">53</div>
<div class="a" style="left:21.5px;width:40px;text-align:right;top:910.69px;font-family:'Liberation Mono';font-size:18.6px;line-height:18.6px;color:#606366;transform:scaleX(0.8);transform-origin:100% 50%">54</div>
<div class="a" style="left:21.5px;width:40px;text-align:right;top:938.19px;font-family:'Liberation Mono';font-size:18.6px;line-height:18.6px;color:#606366;transform:scaleX(0.8);transform-origin:100% 50%">55</div>
<div class="b" style="left:109px;top:106px;width:1px;height:869px;background:#4f4f4f"></div>
<svg style="left:104px;top:138.0px" width="12" height="16" viewBox="0 0 12 16"><path d="M6 0.7L11.3 6V15.3H0.7V6z" fill="#313335" stroke="#555" stroke-width="1.3"/><path d="M3 10.5H9" stroke="#555" stroke-width="1.3"/></svg>
<svg style="left:104px;top:165.5px" width="12" height="16" viewBox="0 0 12 16"><path d="M6 0.7L11.3 6V15.3H0.7V6z" fill="#313335" stroke="#555" stroke-width="1.3"/><path d="M3 10.5H9" stroke="#555" stroke-width="1.3"/></svg>
<svg style="left:104px;top:385.5px" width="12" height="16" viewBox="0 0 12 16"><path d="M6 0.7L11.3 6V15.3H0.7V6z" fill="#313335" stroke="#555" stroke-width="1.3"/><path d="M3 10.5H9" stroke="#555" stroke-width="1.3"/></svg>
<svg style="left:104px;top:715.5px" width="12" height="16" viewBox="0 0 12 16"><path d="M6 0.7L11.3 6V15.3H0.7V6z" fill="#313335" stroke="#555" stroke-width="1.3"/><path d="M3 10.5H9" stroke="#555" stroke-width="1.3"/></svg>
<svg style="left:104px;top:853.0px" width="12" height="16" viewBox="0 0 12 16"><path d="M6 0.7L11.3 6V15.3H0.7V6z" fill="#313335" stroke="#555" stroke-width="1.3"/><path d="M3 10.5H9" stroke="#555" stroke-width="1.3"/></svg>
<svg style="left:104px;top:935.5px" width="12" height="16" viewBox="0 0 12 16"><path d="M6 0.7L11.3 6V15.3H0.7V6z" fill="#313335" stroke="#555" stroke-width="1.3"/><path d="M3 10.5H9" stroke="#555" stroke-width="1.3"/></svg>
<svg style="left:104px;top:252.8px" width="12" height="16" viewBox="0 0 12 16"><path d="M0.7 0.7H11.3V9.5L6 14.6L0.7 9.5z" fill="#313335" stroke="#555" stroke-width="1.3"/><path d="M2.5 5.8H9.5" stroke="#555" stroke-width="1.3"/></svg>
<svg style="left:104px;top:555.3px" width="12" height="16" viewBox="0 0 12 16"><path d="M0.7 0.7H11.3V9.5L6 14.6L0.7 9.5z" fill="#313335" stroke="#555" stroke-width="1.3"/><path d="M2.5 5.8H9.5" stroke="#555" stroke-width="1.3"/></svg>
<svg style="left:104px;top:610.3px" width="12" height="16" viewBox="0 0 12 16"><path d="M0.7 0.7H11.3V9.5L6 14.6L0.7 9.5z" fill="#313335" stroke="#555" stroke-width="1.3"/><path d="M2.5 5.8H9.5" stroke="#555" stroke-width="1.3"/></svg>
<svg style="left:104px;top:471.7px" width="12" height="12" viewBox="0 0 12 12"><rect x="0.7" y="0.7" width="10.6" height="10.6" fill="#313335" stroke="#555" stroke-width="1.3"/><path d="M3 6H9M6 3V9" stroke="#555" stroke-width="1.3"/></svg>
<svg style="left:69.5px;top:248.5px" width="20" height="19" viewBox="0 0 20 19">
<circle cx="6" cy="9" r="5.8" fill="#54a044"/><path d="M4.3 6.2H7.7M4.3 11.8H7.7M6 6.2V11.8" stroke="#1d2a1d" stroke-width="1.2"/>
<path d="M14 17.5V3" stroke="#e25a5a" stroke-width="1.6"/><path d="M10.8 5L14 0L17.2 5z" fill="#e25a5a"/></svg>
<svg style="left:69.5px;top:468.5px" width="20" height="19" viewBox="0 0 20 19">
<circle cx="6" cy="9" r="5.8" fill="#54a044"/><path d="M4.3 6.2H7.7M4.3 11.8H7.7M6 6.2V11.8" stroke="#1d2a1d" stroke-width="1.2"/>
<path d="M14 17.5V3" stroke="#e25a5a" stroke-width="1.6"/><path d="M10.8 5L14 0L17.2 5z" fill="#e25a5a"/></svg>
<svg style="left:41px;top:984px" width="12" height="14" viewBox="0 0 12 14" fill="none" stroke="#afb1b3" stroke-width="1.8">
<circle cx="2.5" cy="2" r="1.6" fill="#afb1b3"/><circle cx="2.5" cy="12" r="1.6" fill="#afb1b3"/><circle cx="9.5" cy="3" r="1.6" fill="#afb1b3"/><path d="M2.5 2V12M9.5 3V5.5Q9.5 8 6 9L2.5 10.5"/></svg>
<div class="a" style="left:59.50px;top:985.85px;font-family:'Liberation Sans';font-size:12.7px;line-height:12.7px;color:#bbbbbb;">Git</div>
<svg style="left:99px;top:983.5px" width="16" height="15" viewBox="0 0 16 15" fill="none" stroke="#afb1b3">
<circle cx="6" cy="6" r="4.6" stroke-width="2.2"/><path d="M9.5 9.5L14.5 14" stroke-width="2.6"/></svg>
<div class="a" style="left:119.50px;top:985.85px;font-family:'Liberation Sans';font-size:12.7px;line-height:12.7px;color:#bbbbbb;">Find</div>
<svg style="left:169px;top:985px" width="11" height="12" viewBox="0 0 11 12"><path d="M0 0L10.5 6L0 12z" fill="#afb1b3"/></svg>
<div class="a" style="left:188.50px;top:985.85px;font-family:'Liberation Sans';font-size:12.7px;line-height:12.7px;color:#bbbbbb;">Run</div>
<svg style="left:236px;top:984.5px" width="14" height="12" viewBox="0 0 14 12" fill="#afb1b3">
<rect x="0" y="0" width="2.5" height="2.5"/><rect x="4" y="0" width="10" height="2.5"/><rect x="0" y="4.5" width="2.5" height="2.5"/><rect x="4" y="4.5" width="10" height="2.5"/><rect x="0" y="9" width="2.5" height="2.5"/><rect x="4" y="9" width="10" height="2.5"/></svg>
<div class="a" style="left:254.50px;top:985.85px;font-family:'Liberation Sans';font-size:12.7px;line-height:12.7px;color:#bbbbbb;">TODO</div>
<svg style="left:318px;top:982.5px" width="13" height="14" viewBox="0 0 13 14"><circle cx="6.5" cy="7" r="6.4" fill="#afb1b3"/><rect x="5.4" y="2.8" width="2.2" height="5.5" fill="#3c3f41"/><rect x="5.4" y="9.5" width="2.2" height="2.2" fill="#3c3f41"/></svg>
<div class="a" style="left:337.50px;top:985.85px;font-family:'Liberation Sans';font-size:12.7px;line-height:12.7px;color:#bbbbbb;">Problems</div>
<svg style="left:419.5px;top:983.5px" width="15" height="13" viewBox="0 0 15 13"><rect x="0" y="0" width="14.3" height="13" fill="#afb1b3"/><path d="M2.5 3L6 5.5L2.5 8" fill="none" stroke="#3c3f41" stroke-width="1.3"/><rect x="6.5" y="9" width="4.5" height="1.3" fill="#3c3f41"/></svg>
<div class="a" style="left:440.00px;top:985.85px;font-family:'Liberation Sans';font-size:12.7px;line-height:12.7px;color:#bbbbbb;">Terminal</div>
<svg style="left:518.5px;top:982.5px" width="15" height="15" viewBox="0 0 15 15"><rect x="0" y="0" width="15" height="15" rx="1.5" fill="#626465"/><rect x="2" y="2" width="11" height="11" fill="#3c3f41"/><path d="M5.5 4H4V11H5.5M9.5 4H11V11H9.5" stroke="#8a8c8e" stroke-width="1.3" fill="none"/></svg>
<div class="a" style="left:540.50px;top:985.85px;font-family:'Liberation Sans';font-size:12.7px;line-height:12.7px;color:#bbbbbb;">Style Checker</div>
<svg style="left:649px;top:982px" width="16" height="16" viewBox="0 0 16 16" fill="#afb1b3">
<path d="M8 0L16 4L8 8L0 4z"/><path d="M0 7L8 11L16 7V8.5L8 12.5L0 8.5z" opacity="0.85"/><path d="M0 10.5L8 14.5L16 10.5V12L8 16L0 12z" opacity="0.7"/></svg>
<div class="a" style="left:669.50px;top:985.85px;font-family:'Liberation Sans';font-size:12.7px;line-height:12.7px;color:#bbbbbb;">Python Packages</div>
<svg style="left:795px;top:982.5px" width="16" height="15" viewBox="0 0 16 15"><path d="M4 0H12L16 7.5L12 15H4L0 7.5z" fill="#afb1b3"/><path d="M6 4L11 7.5L6 11z" fill="#3c3f41"/></svg>
<div class="a" style="left:815.50px;top:985.85px;font-family:'Liberation Sans';font-size:12.7px;line-height:12.7px;color:#bbbbbb;">Services</div>
<svg style="left:887px;top:983px" width="16" height="15" viewBox="0 0 16 15"><path d="M0.5 5.5L5 1L8.5 0L9 1.5L7 3L8 4.5L15.5 12L13.5 14L6 6.5L4 8z" fill="#afb1b3"/></svg>
<div class="a" style="left:908.50px;top:985.85px;font-family:'Liberation Sans';font-size:12.7px;line-height:12.7px;color:#bbbbbb;">Build</div>
<svg style="left:7px;top:1010px" width="16" height="16" viewBox="0 0 16 16" fill="none" stroke="#afb1b3" stroke-width="1.3">
<rect x="4" y="0.7" width="11.3" height="11.3"/><path d="M0.7 4V15.3H12"/></svg>
<div class="a" style="left:33.50px;top:1010.73px;font-family:'Liberation Sans';font-size:14.5px;line-height:14.5px;color:#bbbbbb;">Tests failed: 8, passed: 4 (22 minutes ago)</div>
<div class="a" style="left:1635.50px;top:1010.53px;font-family:'Liberation Sans';font-size:14.5px;line-height:14.5px;color:#bbbbbb;">6:1</div>
<div class="a" style="left:1669.50px;top:1010.53px;font-family:'Liberation Sans';font-size:14.5px;line-height:14.5px;color:#bbbbbb;">LF</div>
<div class="a" style="left:1698.50px;top:1011.29px;font-family:'Liberation Sans';font-size:13.6px;line-height:13.6px;color:#bbbbbb;">UTF-8</div>
<div class="a" style="left:1752.00px;top:1010.95px;font-family:'Liberation Sans';font-size:14px;line-height:14px;color:#bbbbbb;">4 spaces</div>
<svg style="left:1826px;top:1009px" width="18" height="19" viewBox="0 0 18 19" fill="none" stroke="#afb1b3" stroke-width="1.6">
<circle cx="2.5" cy="2.5" r="1.7" fill="#afb1b3"/><circle cx="2.5" cy="15.5" r="1.7" fill="#afb1b3"/><circle cx="10" cy="2.5" r="1.7" fill="#afb1b3"/><path d="M2.5 2.5V15.5M10 2.5V6Q10 9 6 10L2.5 12"/>
<circle cx="12.75" cy="14" r="3.4" fill="#4aab5a" stroke="none"/></svg>
<div class="a" style="left:1845.00px;top:1010.53px;font-family:'Liberation Sans';font-size:14.5px;line-height:14.5px;color:#bbbbbb;">main</div>
<svg style="left:1889.5px;top:1010.5px" width="15" height="14" viewBox="0 0 15 14"><rect x="4.5" y="6" width="10.5" height="7.5" fill="#afb1b3"/><path d="M1.2 6.5V4A3 3 0 0 1 7.2 4V6" fill="none" stroke="#afb1b3" stroke-width="1.6"/></svg>
<div class="b" style="left:0;top:1030px;width:60px;height:50px;background:#1b1f33"></div>
<svg style="left:19.5px;top:1045px" width="21" height="20" viewBox="0 0 21 20" fill="#ffffff">
<path d="M0 2.8L8.5 1.6V9.3H0zM9.6 1.5L21 0V9.3H9.6zM0 10.4H8.5V18.2L0 17zM9.6 10.4H21V20L9.6 18.4z"/></svg>
<div class="b" style="left:60px;top:1030px;width:430px;height:50px;background:#333333;border:1px solid #5c5c5c"></div>
<svg style="left:75px;top:1045px" width="21" height="21" viewBox="0 0 21 21" fill="none" stroke="#e8e8e8" stroke-width="1.5">
<circle cx="13" cy="8" r="6.8"/><path d="M8.2 12.8L1 20"/></svg>
<div class="a" style="left:110.00px;top:1045.92px;font-family:'Liberation Sans';font-size:19px;line-height:19px;color:#dadada;">Type here to search</div>
<svg style="left:390px;top:1032px" width="100" height="48" viewBox="0 0 100 48">
<defs><linearGradient id="shp" x1="0" y1="0" x2="0" y2="1"><stop offset="0" stop-color="#eeeeee"/><stop offset="1" stop-color="#c9b3dd"/></linearGradient></defs>
<g stroke-linecap="round">
<path d="M12 12L19 16M9.5 14.5L17 18.5M21 21L26 18M20 25L28 21M22 29L30 25M27 33L33 29M28 37L35 32M32 39L37 36" stroke="#e8e8f0" stroke-width="1.6" opacity="0.55"/>
<path d="M7 15Q12 19 18 17Q29 15 31.5 23Q32 30 29.5 34Q29 38 32 41" fill="none" stroke="#f0306f" stroke-width="3.2"/>
<path d="M17.5 4.7Q23 9 21 15.5Q17 21 18.5 27Q21 31 25 30.5Q31 28 37 26.8Q41 27 43.3 30.5" fill="none" stroke="#38b6f5" stroke-width="3.2"/>
</g>
<path d="M35.9 3.7L37.3 7.5L41 8.9L37.3 10.3L35.9 14L34.5 10.3L30.8 8.9L34.5 7.5z" fill="#e77ff0"/>
<circle cx="10" cy="37.7" r="2.7" fill="#36c563"/><circle cx="87" cy="14" r="2.7" fill="#f6b40e"/>
<path d="M52 16Q62 15 73 16Q81 16 82.5 23Q84 28 82.5 34Q80 37 70 36.5Q58 37 54 35Q50 31 51 25z" fill="url(#shp)"/>
<rect x="59" y="34" width="4.5" height="7.5" rx="1.5" fill="#e7a065"/><rect x="68" y="34" width="4.5" height="7.5" rx="1.5" fill="#d08850"/><rect x="78.5" y="34" width="4.5" height="7.5" rx="1.5" fill="#e7a065"/>
<path d="M51 10Q53 5 58 6.5Q63 8 63 13Q64 19 58 21Q52 21 51 16z" fill="#ececec"/>
<path d="M49.2 12Q50 10.5 53 11.5L55 13Q56 17 53 18.5Q50 19 48.5 16z" fill="#d5985a"/><circle cx="52.2" cy="14" r="0.8" fill="#222"/>
<ellipse cx="59.5" cy="14.5" rx="2.3" ry="1.8" fill="#e0a870"/></svg>
<svg style="left:509px;top:1044px" width="22" height="22" viewBox="0 0 22 22"><circle cx="11" cy="11" r="8.8" fill="none" stroke="#f4f4f4" stroke-width="2.3"/></svg>
<svg style="left:569px;top:1044.5px" width="22" height="20" viewBox="0 0 22 20" fill="none" stroke="#f4f4f4" stroke-width="1.4">
<path d="M1 1H13M1 19H13"/><rect x="1" y="5" width="12" height="10"/><path d="M19 0V4M19 16V20"/><rect x="17.8" y="7" width="2.4" height="6" fill="#f4f4f4"/></svg>
<svg style="left:629px;top:1039.5px" width="31" height="31" viewBox="0 0 31 31">
<defs><linearGradient id="edg1" x1="0" y1="0" x2="1" y2="1"><stop offset="0" stop-color="#35c1f1"/><stop offset="0.5" stop-color="#1b86d8"/><stop offset="1" stop-color="#0c59a4"/></linearGradient>
<linearGradient id="edg2" x1="0" y1="0" x2="1" y2="0"><stop offset="0" stop-color="#2ab3e8"/><stop offset="1" stop-color="#63d256"/></linearGradient></defs>
<circle cx="15.5" cy="15.5" r="15" fill="url(#edg1)"/><path d="M3 9Q10 0 20 2Q30 5 30.5 15Q30 20 24 21Q18 21 17 17Q22 16 22 12Q20 7 13 8Q6 9 3 15z" fill="url(#edg2)"/>
<path d="M12 17Q12 24 19 26Q25 27 28 23Q24 30 15 30Q12 28 12 17z" fill="#0f4f8f" opacity="0.6"/></svg>
<svg style="left:691px;top:1041px" width="29" height="26" viewBox="0 0 29 26">
<path d="M0 2Q0 0 2 0H10L13 3H27Q29 3 29 5V23Q29 26 26 26H3Q0 26 0 23z" fill="#f2c94c"/><path d="M0 6H29V23Q29 26 26 26H3Q0 26 0 23z" fill="#ffd966"/>
<path d="M7 26V16H22V26H18V20H11V26z" fill="#2d8ee0"/></svg>
<div class="b" style="left:681.5px;top:1078px;width:50px;height:2px;background:#76b9ed"></div>
<svg style="left:752px;top:1041px" width="31" height="28" viewBox="0 0 31 28">
<rect x="8" y="0" width="23" height="28" rx="2" fill="#21a366"/><rect x="8" y="0" width="23" height="9.3" rx="2" fill="#33c481"/><rect x="8" y="18.6" width="23" height="9.4" fill="#107c41"/><rect x="19.5" y="9.3" width="11.5" height="9.3" fill="#185c37" opacity="0.5"/>
<rect x="0" y="6" width="15" height="16" rx="1.5" fill="#107c41"/><path d="M4 10L11 18M11 10L4 18" stroke="#fff" stroke-width="2.2"/></svg>
<svg style="left:814.5px;top:1041px" width="31" height="28" viewBox="0 0 31 28">
<rect x="8" y="0" width="23" height="28" rx="2" fill="#2b7cd3"/><rect x="8" y="0" width="23" height="9.3" rx="2" fill="#41a5ee"/><rect x="8" y="18.6" width="23" height="9.4" fill="#185abd"/>
<rect x="0" y="6" width="15" height="16" rx="1.5" fill="#185abd"/><path d="M2.5 10L4.8 18L7.5 11.5L10.2 18L12.5 10" fill="none" stroke="#fff" stroke-width="1.8"/></svg>
<div class="b" style="left:805px;top:1078px;width:51px;height:2px;background:#76b9ed"></div>
<svg style="left:870px;top:1036px" width="40" height="38" viewBox="0 0 40 38">
<path d="M15 14L19 9.2L24 8.2L30.8 10L26 14.5z" fill="#6b9fd3"/>
<path d="M26 13.5L31 10.5L34.5 24.5L23.5 28L22 25z" fill="#6096cc"/>
<path d="M14.5 15.5L17.5 13L25.5 13.5Q26 19 23 23Q20.5 25.5 22.5 27.5L23 29H15.5Q16.5 24 15 21z" fill="#f2f5f8"/>
<path d="M26.5 11.5Q27 20 20.5 24.5" fill="none" stroke="#111" stroke-width="1.6"/>
<path d="M8.5 20.2L14.5 17.2L15.3 21L11 20.8z" fill="#151515"/><path d="M8.5 20.2L14 18.5" stroke="#9a9a9a" stroke-width="0.6"/>
<path d="M15.5 16Q17 18 19 17.5" fill="none" stroke="#111" stroke-width="1"/><circle cx="20.5" cy="16.3" r="1.3" fill="#111"/></svg>
<svg style="left:938px;top:1040.5px" width="31" height="29" viewBox="0 0 31 29">
<circle cx="16.5" cy="14.5" r="14.5" fill="#ed6c47"/><path d="M16.5 0A14.5 14.5 0 0 1 31 14.5H16.5z" fill="#ff8f6b"/><path d="M16.5 14.5H31A14.5 14.5 0 0 1 16.5 29z" fill="#d35230"/>
<rect x="0" y="7" width="15" height="16" rx="1.5" fill="#c43e1c"/><path d="M5 19V11H8.5Q11 11 11 13.5Q11 16 8.5 16H5" fill="none" stroke="#fff" stroke-width="1.9"/></svg>
<svg style="left:1004px;top:1040px" width="23" height="30" viewBox="0 0 23 30">
<rect x="0" y="0" width="23" height="30" rx="2" fill="#6f7a86"/><rect x="3" y="3" width="17" height="5" fill="#4fc3f7"/>
<g fill="#d9dee3"><rect x="3" y="10" width="4.5" height="4.2"/><rect x="9.2" y="10" width="4.5" height="4.2"/><rect x="15.5" y="10" width="4.5" height="4.2"/>
<rect x="3" y="16" width="4.5" height="4.2"/><rect x="9.2" y="16" width="4.5" height="4.2"/><rect x="3" y="22" width="4.5" height="4.2"/><rect x="9.2" y="22" width="4.5" height="4.2"/></g><rect x="15.5" y="16" width="4.5" height="10.2" fill="#1f6fb2"/></svg>
<svg style="left:1063.5px;top:1040.5px" width="32" height="32" viewBox="0 0 32 32">
<circle cx="14" cy="14" r="13.8" fill="#34a853"/><path d="M2.4 6.52A13.8 13.8 0 0 1 26.28 7.7L14 7.7L8.54 17.15z" fill="#ea4335"/><path d="M26.28 7.7A13.8 13.8 0 0 1 13.32 27.78L19.46 17.15L14 7.7z" fill="#fbbc04"/><circle cx="14" cy="14" r="6.3" fill="#fff"/><circle cx="14" cy="14" r="5" fill="#4285f4"/><defs><linearGradient id="av1" x1="0" y1="0" x2="0" y2="1"><stop offset="0" stop-color="#d8d8d8"/><stop offset="0.45" stop-color="#a8a8a8"/><stop offset="0.55" stop-color="#c02020"/><stop offset="1" stop-color="#8a1010"/></linearGradient></defs><circle cx="21.3" cy="21.5" r="9.8" fill="url(#av1)"/><ellipse cx="20" cy="16" rx="1.5" ry="2.5" fill="#d04050"/></svg>
<div class="b" style="left:1053px;top:1078px;width:51px;height:2px;background:#76b9ed"></div>
<svg style="left:1125.5px;top:1040.5px" width="32" height="32" viewBox="0 0 32 32">
<circle cx="14" cy="14" r="13.8" fill="#34a853"/><path d="M2.4 6.52A13.8 13.8 0 0 1 26.28 7.7L14 7.7L8.54 17.15z" fill="#ea4335"/><path d="M26.28 7.7A13.8 13.8 0 0 1 13.32 27.78L19.46 17.15L14 7.7z" fill="#fbbc04"/><circle cx="14" cy="14" r="6.3" fill="#fff"/><circle cx="14" cy="14" r="5" fill="#4285f4"/><circle cx="21.5" cy="21.5" r="9.8" fill="#dcdcdc"/><path d="M15 15Q17 9.5 22 10Q26.5 11 26 16.5z" fill="#d8202a"/><ellipse cx="21.5" cy="22" rx="4.6" ry="5" fill="#a87458"/><path d="M14 29Q21.5 24 29 29Q25 31.5 21.5 31.5Q17 31.5 14 29z" fill="#1a1a1a"/><path d="M19 23.5Q21.5 25.5 24 23.5" fill="none" stroke="#f0e0d0" stroke-width="0.9"/></svg>
<div class="b" style="left:1115px;top:1078px;width:51px;height:2px;background:#76b9ed"></div>
<svg style="left:1186.5px;top:1043px" width="31" height="23" viewBox="0 0 31 23">
<rect x="0" y="0" width="30.5" height="22.5" rx="1.5" fill="#4a4a4a"/><rect x="0" y="0" width="30.5" height="3.5" fill="#777"/><rect x="10" y="0" width="9" height="3.5" fill="#999"/>
<path d="M4 8.5L10 12.5L4 16.5" fill="none" stroke="#d6d6d6" stroke-width="2.2"/><rect x="13" y="16" width="10" height="2.3" fill="#e6e6e6"/></svg>
<div class="b" style="left:1177px;top:1078px;width:51px;height:2px;background:#76b9ed"></div>
<div class="b" style="left:1234px;top:1030px;width:61px;height:50px;background:#45474f"></div>
<svg style="left:1251px;top:1042px" width="26" height="26" viewBox="0 0 18 18">
<rect x="0" y="0" width="18" height="18" fill="url(#ijg)"/><rect x="0" y="0" width="18" height="18" fill="url(#ijg2)"/><rect x="2.7" y="2.9" width="12.3" height="12.2" fill="url(#ijin)"/>
<path d="M3.9 4.1H6.5M5.2 4.1V9.1M3.9 9.1H6.5M9.4 3.9V8Q9.4 9.3 8.1 9.3H7.3" fill="none" stroke="#fff" stroke-width="1.1"/>
<rect x="3.9" y="12.7" width="5" height="0.95" fill="#fff"/></svg>
<div class="b" style="left:1234px;top:1078px;width:61px;height:2px;background:#76b9ed"></div>
<svg style="left:1406px;top:1043px" width="29" height="24" viewBox="0 0 29 24">
<path d="M20 0A10 10 0 1 0 28 14A8 8 0 0 1 20 0z" fill="#f5c518"/><path d="M4 23Q0 23 0 19.5Q0 16 4 16Q5 11 10 11Q14 11 16 14Q21 13 22 17.5Q25 18 25 20.5Q25 23 22 23z" fill="#b9bfc7"/></svg>
<div class="a" style="left:1444.00px;top:1047.34px;font-family:'Liberation Sans';font-size:18.5px;line-height:18.5px;color:#f0f0f0;">32°C</div>
<svg style="left:1504px;top:1049.5px" width="17" height="10" viewBox="0 0 17 10"><path d="M0.7 9.3L8.5 1.5L16.3 9.3" fill="none" stroke="#f0f0f0" stroke-width="1.4"/></svg>
<svg style="left:1535px;top:1047.5px" width="16" height="16" viewBox="0 0 16 16" fill="none" stroke="#e8e8e8" stroke-width="1.2">
<path d="M0.8 15A14 14 0 0 1 15 0.8M3.5 15A11.5 11.5 0 0 1 15 3.5M6.2 15A8.8 8.8 0 0 1 15 6.2M9 15A6 6 0 0 1 15 9"/><circle cx="13.5" cy="13.5" r="1.6" fill="#f0f0f0" stroke="none"/></svg>
<svg style="left:1564px;top:1045px" width="16" height="20" viewBox="0 0 16 20"><rect x="0" y="0" width="16" height="20" rx="8" fill="#2a8cf5"/>
<path d="M4.5 6.5L11 13L8 15.5V4.5L11 7L4.5 13.5" fill="none" stroke="#fff" stroke-width="1.2"/></svg>
<svg style="left:1595px;top:1045.5px" width="16" height="19" viewBox="0 0 16 19" fill="none" stroke="#e8e8e8" stroke-width="1.2">
<rect x="0.8" y="5" width="9.5" height="9" rx="1.5"/><path d="M10.3 8.5L15 6V13L10.3 10.5"/><path d="M3 2.5Q7 0 11 2.5M3 16.5Q7 19 11 16.5"/></svg>
<svg style="left:1621.5px;top:1045.5px" width="21" height="19" viewBox="0 0 21 19" fill="none" stroke="#e8e8e8" stroke-width="1.2">
<path d="M0.8 6.5H4L9 2V17L4 12.5H0.8z"/><path d="M12 7Q13.5 9.5 12 12M14.5 5Q17 9.5 14.5 14M17.5 2.5Q21 9.5 17.5 16.5" stroke="#e8e8e8"/></svg>
<svg style="left:1651.5px;top:1047.5px" width="21" height="14" viewBox="0 0 21 14">
<path d="M0.5 1V4M3 1V4" stroke="#f0f0f0" stroke-width="1"/><path d="M0 4H3.5V6Q3.5 8 1.75 8Q0 8 0 6z" fill="#f0f0f0"/><path d="M1.75 8V11H5" fill="none" stroke="#f0f0f0" stroke-width="1"/>
<rect x="5" y="4" width="14" height="9" fill="none" stroke="#f0f0f0" stroke-width="1.2"/><rect x="6.5" y="5.5" width="11" height="6" fill="#f0f0f0"/><rect x="19.2" y="6.5" width="1.8" height="4" fill="#f0f0f0"/></svg>
<svg style="left:1686.5px;top:1045px" width="21" height="20" viewBox="0 0 21 20" fill="none" stroke="#e8e8e8" stroke-width="1.2">
<path d="M5 17L15 3Q16.5 1 18 2.5Q19 4 17.5 5.5L7.5 18.5L4.5 19z"/><path d="M13 8Q21 7 19 11Q17 14 12 12M8 14Q0 13 1.5 17Q3 19.5 6 18"/></svg>
<div class="a" style="left:1724.50px;top:1037.60px;font-family:'Liberation Sans';font-size:14.3px;line-height:14.3px;color:#f0f0f0;">ENG</div>
<div class="a" style="left:1731.50px;top:1059.80px;font-family:'Liberation Sans';font-size:14.3px;line-height:14.3px;color:#f0f0f0;">IN</div>
<div class="a" style="left:1789.00px;top:1037.60px;font-family:'Liberation Sans';font-size:14.3px;line-height:14.3px;color:#f0f0f0;">03:09</div>
<div class="a" style="left:1769.00px;top:1059.80px;font-family:'Liberation Sans';font-size:14.3px;line-height:14.3px;color:#f0f0f0;">06-07-2022</div>
<svg style="left:1868.5px;top:1044.5px" width="21" height="21" viewBox="0 0 21 21">
<path d="M0 0H20.5V17H12.5L10.25 20L8 17H0z" fill="#f4f4f4"/><path d="M4 4.5H16.5M4 8H16.5M4 11.5H12" stroke="#222" stroke-width="1.2"/></svg>
<div class="b" style="left:1914px;top:1030px;width:1px;height:50px;background:#6a6a6a"></div>
</body></html>
